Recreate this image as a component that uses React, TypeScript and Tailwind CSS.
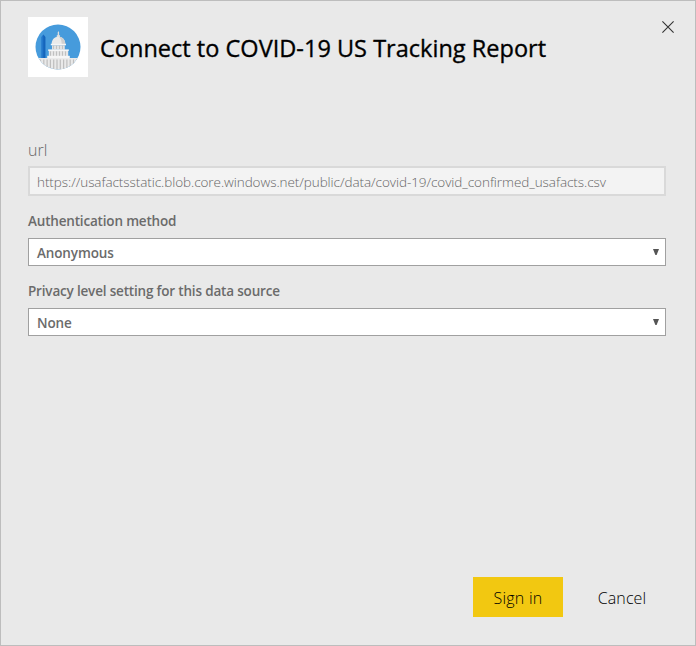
import React from "react";

function CapitolLogo() {
  return (
    <svg width="60" height="60" viewBox="0 0 60 60" className="block bg-white">
      <defs>
        <clipPath id="disc">
          <circle cx="30" cy="30" r="22.5" />
        </clipPath>
      </defs>
      <g clipPath="url(#disc)">
        <rect width="60" height="60" fill="#469bdc" />
        <path d="M13.300 41V20l2-2.500 2 2.500v21z" fill="#2277cb" />
        <path d="M15.300 41V17.500l2 2.500v21z" fill="#1565bb" />
        <path d="M7 41h53v14H7z" fill="#e9e9e9" />
        <path d="M29.700 18v-2.500l.7-1.500.7 1.500V18l1 .6v2h-3.400v-2z" fill="#dedede" />
        <path d="M23.600 27.500c0-5 2.600-7.800 6.800-7.800s6.900 2.800 6.900 7.800z" fill="#eaeaea" />
        <path d="M30.800 19.700c4 .1 6.500 3 6.500 7.800h-3.600c0-3.600-.9-6.400-2.900-7.800z" fill="#d0d0d0" />
        <rect x="22.800" y="26.800" width="15.200" height="1.500" fill="#f5f5f5" />
        <rect x="24" y="28.300" width="12.800" height="4.400" fill="#e2e2e2" />
        <path d="M25.500 28.600v3.800m3-3.800v3.800m3-3.800v3.800m3-3.800v3.800" stroke="#c2c2c2" strokeWidth="1" />
        <rect x="20.200" y="32.400" width="20.600" height="1.600" fill="#f6f6f6" />
        <rect x="20.800" y="34" width="19.400" height="5" fill="#e6e6e6" />
        <path d="M22.500 34.300V39m3-4.700V39m3-4.700V39m3-4.700V39m3-4.700V39m3-4.700V39" stroke="#c0c0c0" strokeWidth="1" />
        <rect x="19.200" y="38.800" width="22.600" height="2.400" fill="#f6f6f6" />
        <path
          d="M12.500 42.500v12m3.300-12v12m3.300-12v12m3.300-12v12m3.300-12v12m3.300-12v12m3.300-12v12m3.300-12v12m3.300-12v12m3.300-12v12m3.300-12v12m3.300-12v12"
          stroke="#bebebe"
          strokeWidth="1.200"
        />
      </g>
    </svg>
  );
}

function SelectField({ label, value }: { label: string; value: string }) {
  return (
    <div className="h-[70px]">
      <div className="h-[26px] whitespace-nowrap text-[13.5px] leading-[18px] font-semibold tracking-[-0.18px] text-[#6b6b6b]">{label}</div>
      <div className="flex h-7 items-center justify-between border border-[#a0a0a0] bg-white pr-1.5 pl-2">
        <span className="pt-0.5 text-[13.5px] leading-[18px] font-semibold tracking-[-0.13px] text-[#6b6b6b]">{value}</span>
        <svg width="6" height="6" viewBox="0 0 6 6" className="block">
          <path d="M0 0h6L3.600 6H2.400z" fill="#555" />
        </svg>
      </div>
    </div>
  );
}

export default function App() {
  return (
    <div className="flex h-[646px] w-[696px] flex-col overflow-hidden border border-[#bdbdbd] bg-[#e9e9e9] pt-4 pr-[29px] pl-[27px] font-['Open_Sans','Noto_Sans',sans-serif]">
      <header className="flex h-[60px] shrink-0">
        <CapitolLogo />
        <h1 className="ml-3 whitespace-nowrap pt-[15px] text-[23.5px] leading-8 font-normal tracking-[0.02px] text-black [-webkit-text-stroke:0.35px_black]">
          Connect to COVID-19 US Tracking Report
        </h1>
        <button aria-label="Close" className="-mr-3 ml-auto flex h-5 w-5 items-center justify-center">
          <svg width="12" height="12" viewBox="0 0 12 12" className="block">
            <path d="M.4.400l11.200 11.200M11.600.4L.4 11.600" stroke="#333" strokeWidth="1.100" fill="none" />
          </svg>
        </button>
      </header>
      <main className="mt-[63px] flex h-[212px] shrink-0 flex-col">
        <label className="h-[27px] text-base leading-[20px] font-light text-[#666]">url</label>
        <div className="flex h-[30px] shrink-0 items-center border-2 border-[#d9d9d9] bg-[#f3f3f3] pt-0.5 pl-[7px]">
          <span className="whitespace-nowrap text-[13.5px] leading-[18px] font-light tracking-[-0.065px] text-[#666]">
            https://usafactsstatic.blob.core.windows.net/public/data/covid-19/covid_confirmed_usafacts.csv
          </span>
        </div>
        <div className="mt-4">
          <SelectField label="Authentication method" value="Anonymous" />
          <SelectField label="Privacy level setting for this data source" value="None" />
        </div>
      </main>
      <footer className="-mr-px mt-auto mb-7 flex h-10 shrink-0 justify-end">
        <button className="h-10 w-[90px] bg-[#f2c811] pt-0.5 text-base font-light tracking-[0.25px] text-black">Sign in</button>
        <button className="ml-[14px] h-10 w-[90px] pt-0.5 text-base font-light tracking-[0.1px] text-black">Cancel</button>
      </footer>
    </div>
  );
}
